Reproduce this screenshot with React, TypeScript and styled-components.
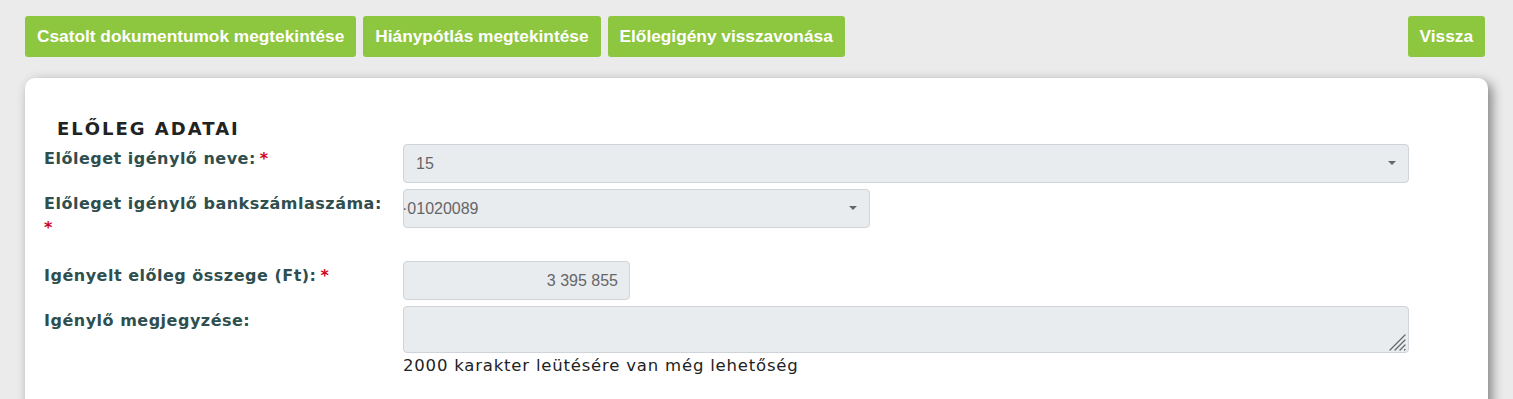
import React from "react";
import styled, { createGlobalStyle } from "styled-components";

const GlobalStyle = createGlobalStyle`
  html, body {
    margin: 0;
    padding: 0;
    background: #ebebeb;
    font-family: "Liberation Sans", Arial, sans-serif;
    overflow: hidden;
  }
`;

const Page = styled.div`
  padding: 16px 25px 0 25px;
`;

const Toolbar = styled.div`
  display: flex;
  gap: 7px;
  align-items: center;
`;

const Spacer = styled.div`
  flex: 1;
`;

const ActionButton = styled.button<{ $end?: boolean }>`
  background: #8dc63f;
  color: #fff;
  border: none;
  border-radius: 3px;
  font-family: "Liberation Sans", Arial, sans-serif;
  font-weight: 700;
  font-size: 17.3px;
  height: 41px;
  padding: 0 12px;
  margin-right: ${(p) => (p.$end ? "3px" : "0")};
  cursor: pointer;
`;

const Card = styled.div`
  margin-top: 21px;
  background: #fff;
  border-radius: 10px;
  box-shadow: 4px 4px 12px rgba(0, 0, 0, 0.45);
  padding: 40px 19px 40px 19px;
  min-height: 400px;
`;

const Heading = styled.h2`
  margin: 0 0 4px 13px;
  font-family: "DejaVu Sans", sans-serif;
  font-weight: 700;
  font-size: 18px;
  letter-spacing: 2px;
  color: #222;
  line-height: 22px;
`;

const Row = styled.div<{ $extra?: number }>`
  display: grid;
  grid-template-columns: 359px 1fr;
  margin-bottom: ${(p) => 6 + (p.$extra ?? 0)}px;
`;

const Label = styled.div`
  font-family: "DejaVu Sans", sans-serif;
  font-weight: 700;
  font-size: 16px;
  letter-spacing: 0.5px;
  line-height: 24px;
  color: #2f4f4f;
  padding-top: 3px;
  padding-right: 8px;
`;

const Required = styled.span<{ $inline?: boolean }>`
  color: #d0021b;
  margin-left: ${(p) => (p.$inline ? "0" : "4px")};
`;

const Field = styled.div<{ $width: number; $align?: string; $pad?: number }>`
  position: relative;
  box-sizing: border-box;
  width: ${(p) => p.$width}px;
  height: 39px;
  background: #e9ecef;
  border: 1px solid #ced4da;
  border-radius: 4px;
  color: #666;
  font-family: "Liberation Sans", Arial, sans-serif;
  font-size: 16px;
  line-height: 37px;
  padding: 0 ${(p) => p.$pad ?? 12}px;
  text-align: ${(p) => p.$align ?? "left"};
  overflow: hidden;
  white-space: nowrap;
`;

const Caret = styled.span`
  position: absolute;
  right: 12px;
  top: 16px;
  width: 0;
  height: 0;
  border-left: 4px solid transparent;
  border-right: 4px solid transparent;
  border-top: 4px solid #666;
`;

const Clipped = styled.span`
  display: inline-block;
  margin-left: -2px;
`;

const NotesWrap = styled.div`
  position: relative;
  width: 1006px;
`;

const Notes = styled.textarea`
  box-sizing: border-box;
  width: 100%;
  height: 47px;
  background: #e9ecef;
  border: 1px solid #ced4da;
  border-radius: 4px;
  resize: none;
  display: block;
  outline: none;
`;

const Grip = styled.svg`
  position: absolute;
  right: 2px;
  bottom: 2px;
  pointer-events: none;
`;

const Helper = styled.div`
  font-family: "DejaVu Sans", sans-serif;
  font-size: 16.5px;
  letter-spacing: 0.8px;
  color: #222;
  margin-top: 3px;
`;

export default function App() {
  return (
    <>
      <GlobalStyle />
      <Page>
        <Toolbar>
          <ActionButton>Csatolt dokumentumok megtekintése</ActionButton>
          <ActionButton>Hiánypótlás megtekintése</ActionButton>
          <ActionButton>Előlegigény visszavonása</ActionButton>
          <Spacer />
          <ActionButton $end>Vissza</ActionButton>
        </Toolbar>
        <Card>
          <Heading>ELŐLEG ADATAI</Heading>
          <Row>
            <Label>
              Előleget igénylő neve:<Required>*</Required>
            </Label>
            <Field $width={1006}>
              15
              <Caret />
            </Field>
          </Row>
          <Row $extra={15}>
            <Label>
              Előleget igénylő bankszámlaszáma:
              <br />
              <Required $inline>*</Required>
            </Label>
            <Field $width={467} $pad={0}>
              <Clipped>·01020089</Clipped>
              <Caret />
            </Field>
          </Row>
          <Row>
            <Label>
              Igényelt előleg összege (Ft):<Required>*</Required>
            </Label>
            <Field $width={227} $align="right" $pad={11}>
              3 395 855
            </Field>
          </Row>
          <Row>
            <Label>Igénylő megjegyzése:</Label>
            <div>
              <NotesWrap>
                <Notes readOnly />
                <Grip width="18" height="18" viewBox="0 0 18 18">
                  <g stroke="#666" strokeWidth="1.3" strokeLinecap="round">
                    <line x1="1" y1="17" x2="16" y2="2" />
                    <line x1="6" y1="17" x2="16" y2="7" />
                    <line x1="11" y1="17" x2="16" y2="12" />
                    <line x1="15.5" y1="17" x2="16" y2="16.5" />
                  </g>
                </Grip>
              </NotesWrap>
              <Helper>2000 karakter leütésére van még lehetőség</Helper>
            </div>
          </Row>
        </Card>
      </Page>
    </>
  );
}
